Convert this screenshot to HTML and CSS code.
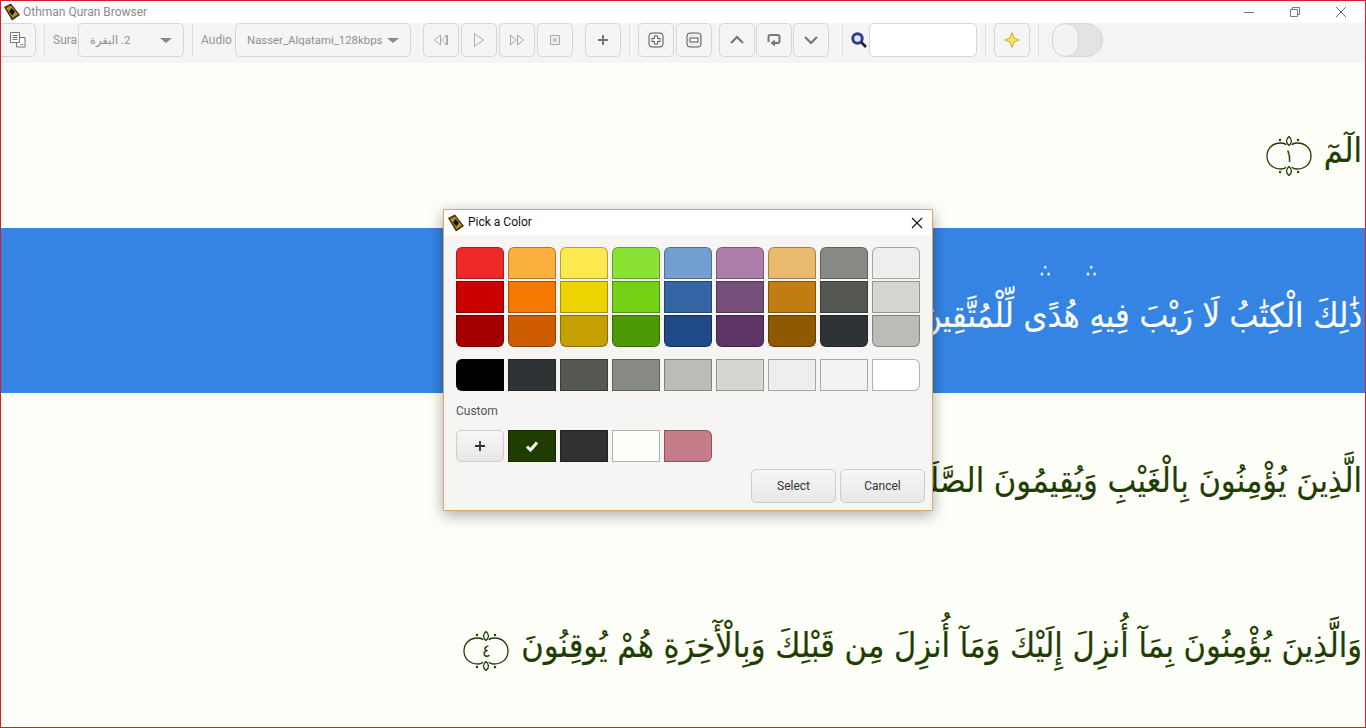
FILE: index.html
```html
<!DOCTYPE html>
<html>
<head>
  <title>Othman Quran Browser</title>
  <link rel="stylesheet" href="styles.css">
</head>
<body>
  <div class="window">
    <div class="titlebar">
      <svg class="app-icon" viewBox="0 0 18 18"><use href="#book"/></svg>
      <span class="app-title">Othman Quran Browser</span>
      <div class="win-controls">
        <svg viewBox="0 0 12 12"><path d="M1 6.500 H11" stroke="#777" fill="none"/></svg>
        <svg viewBox="0 0 12 12"><path d="M1.500 3.500 H8.500 V10.500 H1.500 Z M3.500 3.500 V1.500 H10.500 V8.500 H8.500" stroke="#777" fill="none"/></svg>
        <svg viewBox="0 0 12 12"><path d="M1 1 L11 11 M11 1 L1 11" stroke="#666" fill="none"/></svg>
      </div>
    </div>

    <div class="toolbar">
      <button class="tool tool-first">
        <svg viewBox="0 0 16 16"><path d="M6.500 5.500 H15 V15 H6.500 Z" stroke="#777" fill="#fff"/><path d="M0.500 0.500 H9.500 V10.500 H0.500 Z" stroke="#777" fill="#fff"/><path d="M2.500 3.500 H7.500 M2.500 5.500 H7.500 M2.500 7.500 H7.500 M10.500 12.500 H13" stroke="#777" fill="none"/></svg>
      </button>
      <span class="sep"></span>
      <div class="labelled">
        <span class="tool-label label-sura">Sura</span>
        <div class="combo combo-sura"><span dir="rtl">2. البقرة</span><i class="arrow"></i></div>
      </div>
      <span class="sep"></span>
      <div class="labelled">
        <span class="tool-label label-audio">Audio</span>
        <div class="combo combo-audio"><span>Nasser_Alqatami_128kbps</span><i class="arrow"></i></div>
      </div>
      <div class="group group-media">
        <button class="tool"><svg viewBox="0 0 16 16"><path d="M7.500 3 L1.500 8 L7.500 13 Z M13.500 3 L8.500 8 L13.500 13 Z M14.500 3 V13" stroke="#aaa" fill="#f4f4f4"/></svg></button>
        <button class="tool"><svg viewBox="0 0 16 16"><path d="M3.500 1.500 L12.500 8 L3.500 14.500 Z" stroke="#aaa" fill="#f4f4f4"/></svg></button>
        <button class="tool"><svg viewBox="0 0 16 16"><path d="M1.500 3 L7.500 8 L1.500 13 Z M8.500 3 L14.500 8 L8.500 13 Z" stroke="#aaa" fill="#f4f4f4"/></svg></button>
        <button class="tool"><svg viewBox="0 0 16 16"><path d="M3.500 3.500 H12.500 V12.500 H3.500 Z" stroke="#aaa" fill="#eee"/><path d="M6 6 H10 V10 H6 Z" fill="#ccc"/></svg></button>
      </div>
      <button class="tool tool-plus"><svg viewBox="0 0 16 16"><path d="M8 3 V13 M3 8 H13" stroke="#777" stroke-width="2" fill="none"/></svg></button>
      <span class="sep"></span>
      <div class="group">
        <button class="tool"><svg viewBox="0 0 16 16"><rect x="1" y="1" width="14" height="14" rx="3" stroke="#555" fill="#eee"/><path d="M6.500 4 H9.500 V6.500 H12 V9.500 H9.500 V12 H6.500 V9.500 H4 V6.500 H6.500 Z" stroke="#555" fill="#fff"/></svg></button>
        <button class="tool"><svg viewBox="0 0 16 16"><rect x="1" y="1" width="14" height="14" rx="3" stroke="#555" fill="#eee"/><rect x="4" y="6" width="8" height="4" stroke="#555" fill="#fff"/></svg></button>
      </div>
      <div class="group group-nav">
        <button class="tool"><svg viewBox="0 0 16 16"><path d="M2 11 L8 5 L14 11" stroke="#777" stroke-width="2.200" fill="none"/></svg></button>
        <button class="tool"><svg viewBox="0 0 16 16"><path d="M2.500 10 V5 Q2.500 3 4.500 3 H11.500 Q13.500 3 13.500 5 V9 Q13.500 11 11.500 11 H8" stroke="#777" stroke-width="2" fill="none"/><path d="M9 7.500 L4.500 11 L9 14.500 Z" fill="#777"/></svg></button>
        <button class="tool"><svg viewBox="0 0 16 16"><path d="M2 5 L8 11 L14 5" stroke="#777" stroke-width="2.200" fill="none"/></svg></button>
      </div>
      <span class="sep sep-wide"></span>
      <svg class="search-icon" viewBox="0 0 16 16"><circle cx="6.500" cy="6.500" r="4.700" stroke="#2c3f8f" stroke-width="3" fill="#e6ebfb"/><path d="M10.500 10.500 L15 15" stroke="#222" stroke-width="2.600"/></svg>
      <div class="search-entry"></div>
      <span class="sep"></span>
      <button class="tool"><svg viewBox="0 0 16 16"><path d="M8 0.500 L10 6 L15.500 8 L10 10 L8 15.500 L6 10 L0.500 8 L6 6 Z" stroke="#c9b12c" fill="#f5e85e"/></svg></button>
      <span class="sep"></span>
      <div class="switch"><span class="knob"></span></div>
    </div>

    <div class="verses">
      <div class="verse">
        <span>الٓمٓ</span>
        <span class="ayah"><svg viewBox="0 0 46 40"><use href="#ayah-ring"/></svg><b>١</b></span>
      </div>
      <div class="verse verse-selected">
        <span>ذَٰلِكَ الْكِتَٰبُ لَا رَيْبَ فِيهِ هُدًى لِّلْمُتَّقِينَ</span>
        <span class="waqf waqf-a">∴</span>
        <span class="waqf waqf-b">∴</span>
      </div>
      <div class="verse">
        <span>الَّذِينَ يُؤْمِنُونَ بِالْغَيْبِ وَيُقِيمُونَ الصَّلَوٰةَ وَمِمَّا رَزَقْنَٰهُمْ يُنفِقُونَ</span>
      </div>
      <div class="verse">
        <span>وَالَّذِينَ يُؤْمِنُونَ بِمَآ أُنزِلَ إِلَيْكَ وَمَآ أُنزِلَ مِن قَبْلِكَ وَبِالْأٓخِرَةِ هُمْ يُوقِنُونَ</span>
        <span class="ayah"><svg viewBox="0 0 46 40"><use href="#ayah-ring"/></svg><b>٤</b></span>
      </div>
    </div>

    <div class="dialog">
      <div class="dialog-title">
        <svg class="app-icon" viewBox="0 0 18 18"><use href="#book"/></svg>
        <span class="dialog-name">Pick a Color</span>
        <svg class="dialog-close" viewBox="0 0 12 12"><path d="M1 1 L11 11 M11 1 L1 11" stroke="#111" stroke-width="1.100" fill="none"/></svg>
      </div>
      <div class="dialog-body">
        <div class="palette">
          <i class="sw top c-ef2929"></i><i class="sw top c-fcaf3e"></i><i class="sw top c-fce94f"></i><i class="sw top c-8ae234"></i><i class="sw top c-729fcf"></i><i class="sw top c-ad7fa8"></i><i class="sw top c-e9b96e"></i><i class="sw top c-888a85"></i><i class="sw top c-eeeeec"></i>
          <i class="sw c-cc0000"></i><i class="sw c-f57900"></i><i class="sw c-edd400"></i><i class="sw c-73d216"></i><i class="sw c-3465a4"></i><i class="sw c-75507b"></i><i class="sw c-c17d11"></i><i class="sw c-555753"></i><i class="sw c-d3d7cf"></i>
          <i class="sw bottom c-a40000"></i><i class="sw bottom c-ce5c00"></i><i class="sw bottom c-c4a000"></i><i class="sw bottom c-4e9a06"></i><i class="sw bottom c-204a87"></i><i class="sw bottom c-5c3566"></i><i class="sw bottom c-8f5902"></i><i class="sw bottom c-2e3436"></i><i class="sw bottom c-babdb6"></i>
        </div>
        <div class="palette greys">
          <i class="sw left c-000000"></i><i class="sw c-2e3436"></i><i class="sw c-555753"></i><i class="sw c-888a85"></i><i class="sw c-babdb6"></i><i class="sw c-d3d7cf"></i><i class="sw c-eeeeec"></i><i class="sw c-f3f3f3"></i><i class="sw right c-ffffff"></i>
        </div>
        <div class="custom-label">Custom</div>
        <div class="palette custom">
          <button class="sw-add"><svg viewBox="0 0 12 12"><path d="M6 1 V11 M1 6 H11" stroke="#2e3436" stroke-width="1.800" fill="none"/></svg></button>
          <i class="sw c-1f3d00 sw-check"><svg viewBox="0 0 14 12"><path d="M2 6.500 L5.500 10 L12 2.500" stroke="#fff" stroke-width="3" fill="none"/></svg></i>
          <i class="sw c-333031"></i><i class="sw c-fffffa"></i><i class="sw right c-c67d8a"></i>
        </div>
        <div class="dialog-actions">
          <button class="btn">Select</button>
          <button class="btn">Cancel</button>
        </div>
      </div>
    </div>
  </div>

  <svg class="defs" width="0" height="0">
    <symbol id="book" viewBox="0 0 18 18">
      <path d="M1 4 L8 0.500 L17 12 L9 17.500 Z" fill="#3d3010"/>
      <path d="M3 5 L8 2.500 L15 11.500 L9.500 15 Z" fill="#b59320"/>
      <path d="M8.500 5 L12 8.800 L9.300 12.500 L6 8.500 Z" fill="#111"/>
    </symbol>
    <symbol id="ayah-ring" viewBox="0 0 46 40">
      <path d="M15 7 C5 7 1 14 1 20 C1 27 6 33 15 33 Q19 33 20 31 M31 7 C41 7 45 14 45 20 C45 27 40 33 31 33 Q27 33 26 31 M15 7 Q19 7 20 9 M31 7 Q27 7 26 9" fill="none" stroke="#1f3d00" stroke-width="1.300"/>
      <path d="M23 0.500 Q28 5 23 9.500 Q18 5 23 0.500 Z M23 30.500 Q28 35 23 39.500 Q18 35 23 30.500 Z" fill="none" stroke="#1f3d00" stroke-width="1.300"/>
      <circle cx="14" cy="4" r="1.200" fill="#1f3d00"/><circle cx="32" cy="4" r="1.200" fill="#1f3d00"/><circle cx="14" cy="36" r="1.200" fill="#1f3d00"/><circle cx="32" cy="36" r="1.200" fill="#1f3d00"/>
    </symbol>
  </svg>
</body>
</html>
```

FILE: styles.css
```css
* {
  box-sizing: border-box;
}
body {
  margin: 0;
  overflow: hidden;
  font-family: Roboto, "DejaVu Sans", sans-serif;
  font-size: 12px;
}
button {
  font-family: inherit;
  padding: 0;
}
.defs {
  position: absolute;
}
.window {
  position: relative;
  width: 1366px;
  height: 728px;
  border: 1px solid #d1202c;
  background-color: #fffffa;
  overflow: hidden;
  display: flex;
  flex-direction: column;
}

/* title bar */
.titlebar {
  height: 22px;
  flex: none;
  background-color: #fff;
  display: flex;
  align-items: center;
  padding-left: 2px;
}
.app-icon {
  width: 18px;
  height: 18px;
  flex: none;
}
.app-title {
  margin: -1px 0 0 2px;
  color: #8a8a8a;
}
.win-controls {
  margin-left: auto;
  display: flex;
  gap: 34px;
  padding-right: 18px;
}
.win-controls svg {
  width: 12px;
  height: 12px;
}

/* toolbar */
.toolbar {
  height: 40px;
  flex: none;
  background-color: #f5f4f4;
  display: flex;
  align-items: flex-start;
  gap: 8px;
  padding-bottom: 6px;
}
.tool {
  width: 36px;
  height: 34px;
  flex: none;
  background-color: #f6f5f5;
  border: 1px solid #d8d6d4;
  border-radius: 5px;
  display: flex;
  align-items: center;
  justify-content: center;
}
.tool svg {
  width: 16px;
  height: 16px;
}
.tool-first {
  margin-left: -1px;
  border-left: none;
  border-radius: 0 5px 5px 0;
}
.sep {
  width: 1px;
  height: 32px;
  margin-top: 1px;
  flex: none;
  background-color: #e0dfde;
}
.sep-wide {
  margin-left: 5px;
}
.labelled {
  display: flex;
  flex: none;
}
.tool-label {
  color: #969696;
  line-height: 34px;
}
.label-sura {
  width: 25px;
}
.label-audio {
  width: 34px;
}
.combo {
  height: 34px;
  flex: none;
  border: 1px solid #d8d6d4;
  border-radius: 5px;
  background-color: #f6f5f5;
  color: #8f8f8f;
  font-size: 11.4px;
  display: flex;
  align-items: center;
  justify-content: space-between;
  padding: 0 11px;
}
.combo-sura {
  width: 106px;
}
.combo-audio {
  width: 176px;
}
.arrow {
  width: 0;
  height: 0;
  border-left: 6px solid transparent;
  border-right: 6px solid transparent;
  border-top: 5px solid #888;
}
.group {
  display: flex;
  gap: 2px;
}
.group-media {
  margin-left: 4px;
}
.group-nav {
  gap: 1px;
  margin-left: -1px;
}
.tool-plus {
  margin-left: 4px;
}
.search-icon {
  width: 16px;
  height: 16px;
  margin: 9px -6px 0 0;
  flex: none;
}
.search-entry {
  width: 108px;
  height: 34px;
  flex: none;
  background-color: #fff;
  border: 1px solid #d8d6d4;
  border-radius: 5px;
}
.switch {
  width: 51px;
  height: 34px;
  margin-left: 5px;
  flex: none;
  background-color: #e4e3e2;
  border: 1px solid #d8d6d4;
  border-radius: 17px;
}
.knob {
  display: block;
  width: 27px;
  height: 34px;
  margin: -1px 0 0 -1px;
  background-color: #f4f3f3;
  border: 1px solid #d3d1cf;
  border-radius: 17px;
}

/* verses */
.verses {
  flex: 1;
  min-height: 0;
}
.verse {
  position: relative;
  height: 165px;
  padding: 55px 3px 0 0;
  direction: rtl;
  white-space: nowrap;
  color: #1f3d00;
  font-family: "DejaVu Sans", sans-serif;
  font-stretch: condensed;
  font-size: 34px;
  line-height: 64px;
  -webkit-text-stroke: 0.2px currentColor;
}
.verse-selected {
  background-color: #3584e4;
  color: #fff;
}
.waqf {
  position: absolute;
  top: 33px;
  font-size: 18px;
  line-height: 20px;
}
.waqf-a {
  left: 1039px;
}
.waqf-b {
  left: 1085px;
}
.ayah {
  position: relative;
  display: inline-block;
  width: 46px;
  height: 40px;
  margin-right: 2px;
  vertical-align: -14px;
  -webkit-text-stroke: 0;
}
.ayah svg {
  display: block;
  width: 46px;
  height: 40px;
}
.ayah b {
  position: absolute;
  inset: 0;
  text-align: center;
  font-size: 18px;
  font-weight: normal;
  line-height: 40px;
}

/* colour dialog */
.dialog {
  position: absolute;
  left: 442px;
  top: 208px;
  width: 490px;
  height: 302px;
  border: 1px solid #d3ab64;
  background-color: #f6f5f4;
  box-shadow: 0 4px 14px rgba(0, 0, 0, 0.35);
  display: flex;
  flex-direction: column;
}
.dialog-title {
  height: 25px;
  flex: none;
  background-color: #fff;
  display: flex;
  align-items: center;
  gap: 3px;
  padding-left: 3px;
  color: #111;
}
.dialog-name {
  margin-top: -1px;
}
.dialog-close {
  width: 12px;
  height: 12px;
  margin-left: auto;
  margin-right: 9px;
}
.dialog-body {
  flex: 1;
  padding: 12px 12px 7px;
  display: flex;
  flex-direction: column;
}
.palette {
  display: grid;
  grid-template-columns: repeat(9, 48px);
  grid-auto-rows: 32px;
  column-gap: 4px;
  row-gap: 2px;
}
.greys {
  margin-top: 12px;
}
.custom-label {
  margin-top: 13px;
  height: 26px;
  color: #555;
}
.sw {
  display: flex;
  align-items: center;
  justify-content: center;
  border: 1px solid rgba(0, 0, 0, 0.3);
}
.sw.top {
  border-radius: 6px 6px 0 0;
}
.sw.bottom {
  border-radius: 0 0 6px 6px;
}
.sw.left {
  border-radius: 6px 0 0 6px;
}
.sw.right {
  border-radius: 0 6px 6px 0;
}
.sw-check svg {
  width: 14px;
  height: 12px;
}
.sw-add {
  background: linear-gradient(#f8f7f7, #e8e7e6);
  border: 1px solid #cfcdcb;
  border-radius: 5px;
  display: flex;
  align-items: center;
  justify-content: center;
}
.sw-add svg {
  width: 12px;
  height: 12px;
}
.dialog-actions {
  margin-top: auto;
  margin-right: -5px;
  display: flex;
  justify-content: flex-end;
  gap: 4px;
}
.btn {
  width: 85px;
  height: 34px;
  background: linear-gradient(#f8f7f7, #e8e7e6);
  border: 1px solid #cfcdcb;
  border-radius: 5px;
  color: #2e3436;
  font-size: 12px;
}
.c-ef2929 { background-color: #ef2929; }
.c-fcaf3e { background-color: #fcaf3e; }
.c-fce94f { background-color: #fce94f; }
.c-8ae234 { background-color: #8ae234; }
.c-729fcf { background-color: #729fcf; }
.c-ad7fa8 { background-color: #ad7fa8; }
.c-e9b96e { background-color: #e9b96e; }
.c-888a85 { background-color: #888a85; }
.c-eeeeec { background-color: #eeeeec; }
.c-cc0000 { background-color: #cc0000; }
.c-f57900 { background-color: #f57900; }
.c-edd400 { background-color: #edd400; }
.c-73d216 { background-color: #73d216; }
.c-3465a4 { background-color: #3465a4; }
.c-75507b { background-color: #75507b; }
.c-c17d11 { background-color: #c17d11; }
.c-555753 { background-color: #555753; }
.c-d3d7cf { background-color: #d3d7cf; }
.c-a40000 { background-color: #a40000; }
.c-ce5c00 { background-color: #ce5c00; }
.c-c4a000 { background-color: #c4a000; }
.c-4e9a06 { background-color: #4e9a06; }
.c-204a87 { background-color: #204a87; }
.c-5c3566 { background-color: #5c3566; }
.c-8f5902 { background-color: #8f5902; }
.c-2e3436 { background-color: #2e3436; }
.c-babdb6 { background-color: #babdb6; }
.c-000000 { background-color: #000000; }
.c-f3f3f3 { background-color: #f3f3f3; }
.c-ffffff { background-color: #ffffff; }
.c-1f3d00 { background-color: #1f3d00; }
.c-333031 { background-color: #333031; }
.c-fffffa { background-color: #fffffa; }
.c-c67d8a { background-color: #c67d8a; }
```
